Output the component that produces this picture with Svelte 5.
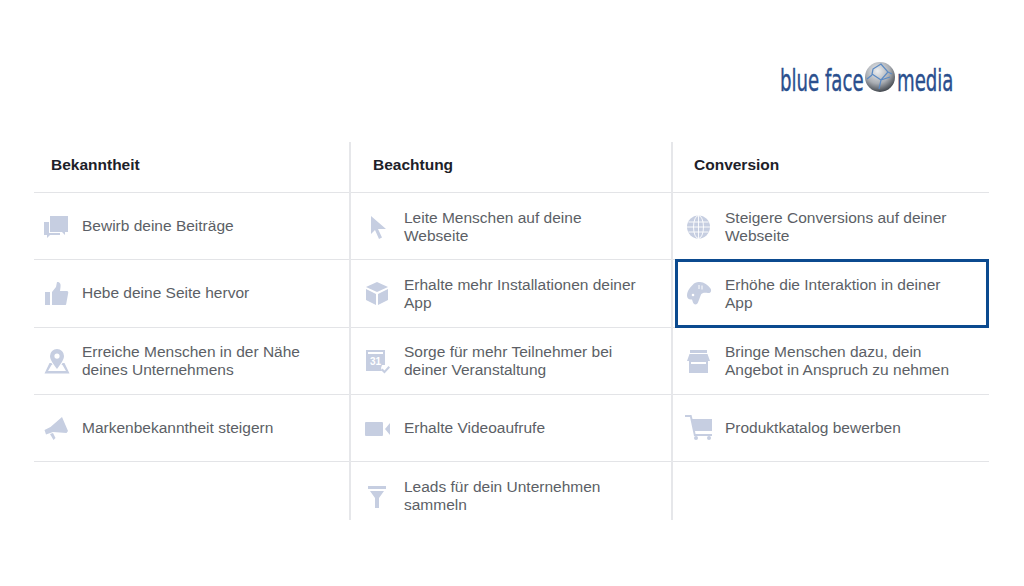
<script lang="ts">
  const columns = [
    {
      title: 'Bekanntheit',
      rows: [
        { label: 'Bewirb deine Beiträge', icon: chat },
        { label: 'Hebe deine Seite hervor', icon: thumb },
        { label: 'Erreiche Menschen in der Nähe deines Unternehmens', icon: pin },
        { label: 'Markenbekanntheit steigern', icon: megaphone }
      ]
    },
    {
      title: 'Beachtung',
      rows: [
        { label: 'Leite Menschen auf deine Webseite', icon: cursor },
        { label: 'Erhalte mehr Installationen deiner App', icon: cube },
        { label: 'Sorge für mehr Teilnehmer bei deiner Veranstaltung', icon: calendar },
        { label: 'Erhalte Videoaufrufe', icon: video },
        { label: 'Leads für dein Unternehmen sammeln', icon: funnel }
      ]
    },
    {
      title: 'Conversion',
      rows: [
        { label: 'Steigere Conversions auf deiner Webseite', icon: globe },
        { label: 'Erhöhe die Interaktion in deiner App', icon: gamepad, selected: true },
        { label: 'Bringe Menschen dazu, dein Angebot in Anspruch zu nehmen', icon: store },
        { label: 'Produktkatalog bewerben', icon: cart }
      ]
    }
  ];
</script>

{#snippet chat()}
  <path d="M8 5h18v16h-3v3l-3-3H8z" />
  <path d="M2 11h5v11h11v2H8l-3 3v-3H2z" />
{/snippet}

{#snippet thumb()}
  <path d="M3 14h5v13H3z" />
  <path d="M10 14l4-5 1-5c3 0 4 2 3.500 5l-.5 4h7c1 0 1.500 1 1.200 2l-2 11c0 1-1 1-2 1H10z" />
{/snippet}

{#snippet pin()}
  <path fill-rule="evenodd" d="M15 3a7 7 0 0 1 7 7c0 4-3.500 8-7 13-3.500-5-7-9-7-13a7 7 0 0 1 7-7zm0 4.500a2.600 2.600 0 1 0 0 5.200 2.600 2.600 0 0 0 0-5.200z" />
  <path d="M7.500 17h2l1 2H9.500l-3.500 6h18l-3.500-6H19.500l1-2h2L27.500 27.500h-25z" />
{/snippet}

{#snippet megaphone()}
  <path d="M20 4l6 14-1.500 2-13.500-1-7 2.500-1.500-4.500 6-3z" />
  <path d="M8 21l3-1 2.500 5-2 2z" />
{/snippet}

{#snippet cursor()}
  <path d="M10 4v18l4-4 4 9 3-1.500-4-8.500h8z" />
{/snippet}

{#snippet cube()}
  <path d="M16 3l11 5-11 5-11-5z" />
  <path d="M5 10l10 5v11l-10-5z" />
  <path d="M27 10l-10 5v11l10-5z" />
{/snippet}

{#snippet calendar()}
  <path fill-rule="evenodd" d="M5 4h19v15h-3l-1 3 1 3H5zm2 2v2h15V6z" />
  <text x="14.500" y="19" class="cal-day">31</text>
  <path d="M20 24l1.500-1.500 2 2 4-4.500 1.500 1.500-5.500 6z" />
{/snippet}

{#snippet video()}
  <rect x="4" y="9" width="18" height="14" rx="1" />
  <path d="M24 16l5-6v12z" />
{/snippet}

{#snippet funnel()}
  <path d="M7 5h18v3H7z" />
  <path d="M9 10h14l-5 7v10h-4V17z" />
{/snippet}

{#snippet globe()}
  <circle cx="14.500" cy="15" r="11.500" />
  <g class="grid-lines">
    <ellipse cx="14.500" cy="15" rx="5" ry="11.500" />
    <path d="M14.500 3.500v23M3 15h23M4.500 10h20M4.500 20h20" />
  </g>
{/snippet}

{#snippet gamepad()}
  <path d="M16 3c4 0 8 3 10.500 6.500 1.500 2.500 0 5-2.500 4.500-3-.5-6-.5-7 1.500l-3 8c-1 2.500-4 2.500-5 0l-1-3c-3 .5-5-1-5-4 0-5 4-9 7-12 2-1.500 4-1.500 6-1.500z" />
  <circle cx="9" cy="16" r="1.300" class="hole" />
  <path d="M15 6v4M18 6.500v4" class="hole-line" />
{/snippet}

{#snippet store()}
  <path d="M6 4h17v3H6z" />
  <path d="M5.500 8h18L26 15H24v12H5V15H3z" />
  <path d="M7 16h15v2H7z" class="hole" />
{/snippet}

{#snippet cart()}
  <path d="M1 2h6.500l1 4H28v12H11l.5 3H28v2H10L6 4H1z" />
  <circle cx="12" cy="25" r="2" />
  <circle cx="25" cy="25" r="2" />
{/snippet}

<main class="page">
  <header class="brand">
    <span class="word first">blue face</span>
    <svg class="earth" viewBox="0 0 32 32" width="32" height="32" aria-hidden="true">
      <defs>
        <radialGradient id="earth-fill" cx="0.420" cy="0.300" r="0.750">
          <stop offset="0" stop-color="#eef0f2" />
          <stop offset="0.550" stop-color="#a9adb3" />
          <stop offset="1" stop-color="#33383f" />
        </radialGradient>
      </defs>
      <circle cx="16" cy="16" r="15" fill="url(#earth-fill)" />
      <path d="M9 8l8-5 7 8-7 8-9-6zM17 19l9-3M8 14l-5 4M17 19l-2 9M24 11l4 2M9 8l-1 6" fill="none" stroke="#5b8ac4" stroke-width="1.200" />
    </svg>
    <span class="word second">media</span>
  </header>

  <section class="table">
    {#each columns as column}
      <div class="column">
        <h2>{column.title}</h2>
        {#each column.rows as row}
          <div class="row" class:selected={row.selected}>
            <svg class="icon" viewBox="0 0 30 30" width="30" height="30" aria-hidden="true">
              {@render row.icon()}
            </svg>
            <span>{row.label}</span>
          </div>
        {/each}
      </div>
    {/each}
  </section>
</main>

<style>
  :global(body) {
    background: #fff;
  }

  .page {
    height: 586px;
    box-sizing: border-box;
    padding: 58px 35px 0 34px;
    font-family: "Liberation Sans", Arial, sans-serif;
    overflow: hidden;
  }

  .brand {
    display: flex;
    justify-content: flex-end;
    align-items: center;
    height: 38px;
    padding-right: 36px;
    margin-bottom: 46px;
    color: #2a4f8e;
  }

  /* no narrow face installed, so squeeze the condensed one */
  .word {
    display: block;
    font-family: "DejaVu Sans", sans-serif;
    font-stretch: condensed;
    font-size: 31px;
    line-height: 38px;
    padding-top: 6px;
    white-space: nowrap;
    transform-origin: left center;
    transform: scaleX(0.65);
    -webkit-text-stroke: 0.4px #2a4f8e;
  }

  .first {
    width: 83px;
  }

  .second {
    width: 56px;
  }

  .earth {
    margin: 0 1px;
  }

  .table {
    display: grid;
    grid-template-columns: 315px 322px 318px;
    height: 378px;
    overflow: hidden;
  }

  .column {
    border-left: 2px solid #e6e7ea;
    box-sizing: border-box;
  }

  .column:first-child {
    border-left: 0;
  }

  h2 {
    margin: 0;
    height: 51px;
    box-sizing: border-box;
    padding: 14px 0 0 17px;
    font-size: 15.500px;
    line-height: 17px;
    font-weight: 700;
    color: #1d2129;
    border-bottom: 1px solid #e3e4e7;
  }

  .column:nth-child(2) h2 {
    padding-left: 22px;
  }

  .column:nth-child(3) h2 {
    padding-left: 21px;
  }

  .row {
    position: relative;
    display: flex;
    align-items: center;
    gap: 10px;
    height: 67.250px;
    box-sizing: border-box;
    padding-left: 8px;
    border-bottom: 1px solid #e3e4e7;
    font-size: 15.500px;
    line-height: 18px;
    color: #5c5f66;
  }

  .row span {
    max-width: 240px;
  }

  .column:nth-child(2) .row {
    padding-left: 10px;
    gap: 13px;
  }

  .column:nth-child(3) .row {
    padding-left: 11px;
    gap: 11px;
  }

  .column:not(:first-child) .row:nth-child(-n + 3) {
    padding-top: 1px;
  }

  .column:nth-child(2) .row:last-child {
    height: 58px;
    padding-top: 9px;
    border-bottom: 0;
  }

  .selected::after {
    content: "";
    position: absolute;
    inset: -1px 0 -1px 2px;
    border: 3px solid #0b4a8f;
  }

  .icon {
    flex: none;
    fill: #c6cee1;
  }

  .cal-day {
    fill: #fff;
    font-size: 10px;
    font-weight: 700;
    text-anchor: middle;
  }

  .grid-lines {
    fill: none;
    stroke: #fff;
    stroke-width: 0.900;
  }

  .hole {
    fill: #fff;
  }

  .hole-line {
    fill: none;
    stroke: #fff;
    stroke-width: 1;
  }
</style>
